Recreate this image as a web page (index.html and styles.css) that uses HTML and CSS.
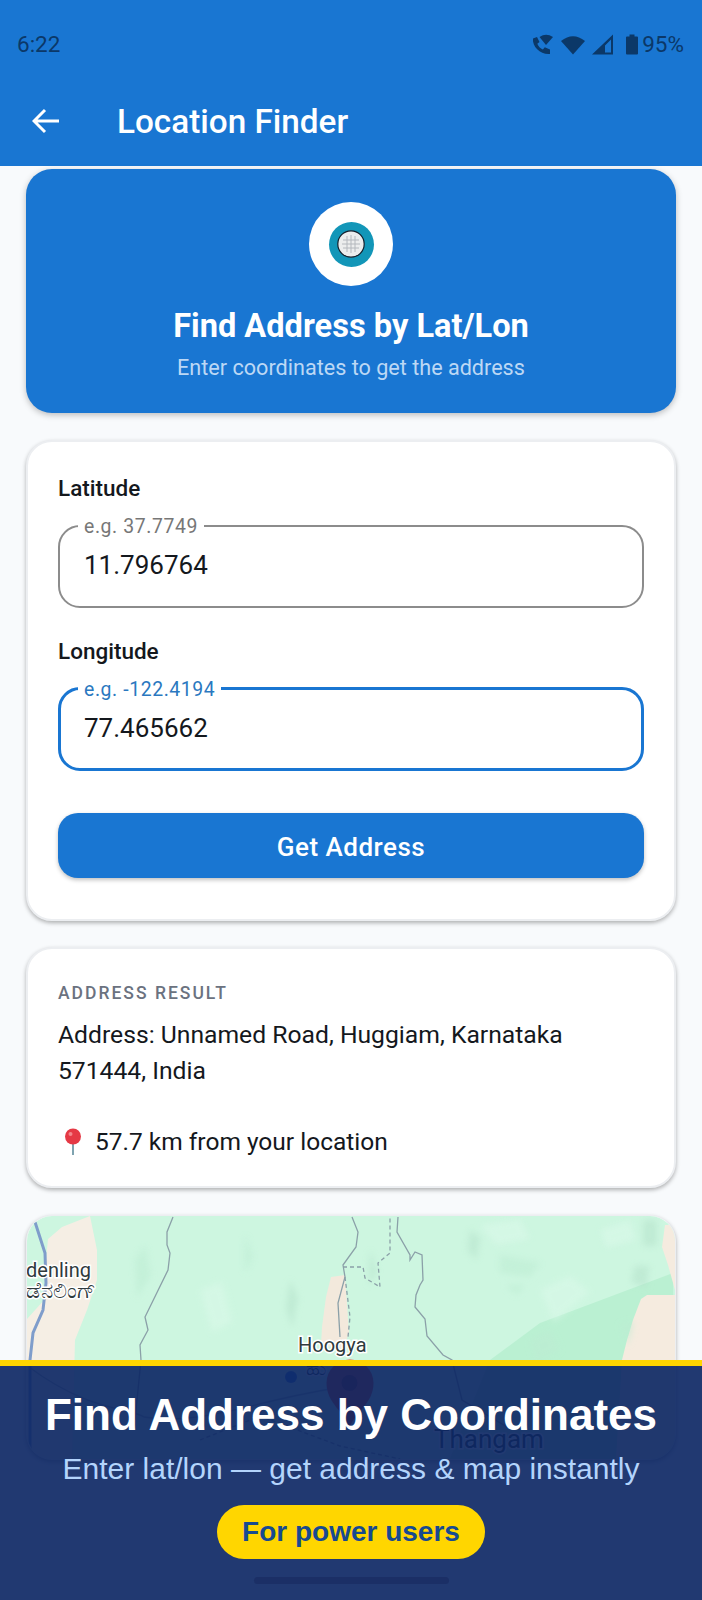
FILE: index.html
```html
<!DOCTYPE html>
<html lang="en">
<head>
  <meta charset="UTF-8">
  <title>Location Finder</title>
  <link rel="stylesheet" href="styles.css">
</head>
<body>
  <div class="phone">
    <header class="topbar">
      <div class="status">
        <span>6:22</span>
        <div class="status-right">
          <svg class="ic-call" viewBox="0 0 22 21"><path d="M1 4.500 5 3l2.500 5-2.200 1.800c1 2.600 3 4.600 5.600 5.600l1.900-2.200 5.200 2.400V20c-9 1-18-7-17-15.500z"/><path d="M7.500 3Q14 -1.500 21 3L14 11z"/></svg>
          <svg class="ic-wifi" viewBox="0 0 24 20"><path d="M0 6.500Q12 -3 24 6.500L12 20z"/></svg>
          <svg class="ic-signal" viewBox="0 0 21 20"><path d="M21 0v20H0zM19 5 13 11v7h6z" fill-rule="evenodd"/></svg>
          <svg class="ic-batt" viewBox="0 0 12 20"><path d="M3.500 0h5v2H11a1 1 0 0 1 1 1v16a1 1 0 0 1-1 1H1a1 1 0 0 1-1-1V3a1 1 0 0 1 1-1h2.500z"/></svg>
          <span>95%</span>
        </div>
      </div>
      <div class="toolbar">
        <svg class="ic-back" viewBox="0 0 28 26"><path d="M27 13H3M13 2 2 13l11 11"/></svg>
        <h1>Location Finder</h1>
      </div>
    </header>

    <main>
      <section class="hero">
        <div class="logo">
          <div class="logo-ring">
            <svg viewBox="0 0 28 28"><circle cx="14" cy="14" r="13.200" fill="#eceded" stroke="#14202c" stroke-width="1.200"/><path d="M6 10h16M5 14h18M6 18h16M10 6v16M14 5v18M18 6v16" stroke="#b4b8bd" stroke-width="1" fill="none"/></svg>
          </div>
        </div>
        <h2>Find Address by Lat/Lon</h2>
        <p>Enter coordinates to get the address</p>
      </section>

      <section class="card form-card">
        <label class="field-title" for="lat">Latitude</label>
        <div class="field">
          <span class="float-label">e.g. 37.7749</span>
          <input id="lat" value="11.796764">
        </div>
        <label class="field-title" for="lon">Longitude</label>
        <div class="field focused">
          <span class="float-label">e.g. -122.4194</span>
          <input id="lon" value="77.465662">
        </div>
        <button class="submit">Get Address</button>
      </section>

      <section class="card result-card">
        <div class="result-label">ADDRESS RESULT</div>
        <p>Address: Unnamed Road, Huggiam, Karnataka 571444, India</p>
        <p class="distance">
          <svg class="ic-pin" viewBox="0 0 20 27"><path d="M10 15v12" stroke="#7fa3b0" stroke-width="2"/><circle cx="10" cy="8.500" r="8" fill="#e53945"/><circle cx="7.500" cy="6" r="2" fill="#f4868c"/></svg>
          57.7 km from your location
        </p>
      </section>

      <section class="card map-card">
        <svg class="map" viewBox="27 1216 648 243" preserveAspectRatio="none">
          <defs>
            <filter id="soft" x="-10%" y="-10%" width="120%" height="120%"><feGaussianBlur stdDeviation="3"/></filter>
          </defs>
          <rect x="27" y="1216" width="648" height="243" fill="#cdf6e0"/>
          <path d="M90 1216l7 34v30l-10 30-12 30-3 119H27v-140l18-20v-30l3-30 14-12z" fill="#f5eee4"/>
          <path d="M322 1327l4-30 5-20 14-2 4 58-6 16-22-4z" fill="#f3e9dc"/>
          <path d="M673 1273 540 1323 490 1360 450 1459h225z" fill="#baf0d2"/>
          <path d="M675 1295h-28l-6 4-8 21-6 20-5 20-6 99h59z" fill="#f5ebdf"/>
          <path d="M665 1225l-3 22 6 18 7 25v-65z" fill="#f5ebdf"/>
          <g filter="url(#soft)" opacity=".55">
            <path d="M643 1220h14v26h-14zM635 1266h14l-2 22-16-6zM290 1280l8 18-6 30-6-20zM370 1250l7 22-8 14zM470 1230l10 8-4 22-8-10z" fill="#b5e2cb"/>
            <path d="M500 1255l40 8-10 14-30-4zM505 1285h20l-8 10zM530 1340l20-10 10 20-24 12zM620 1325l14-4-6 24zM135 1260l10-14 6 30-14 22zM245 1235l8 22-8 16z" fill="#bdecd3"/>
            <path d="M480 1225l40-6 10 20-34 6zM540 1290l30-14 20 16-36 30zM200 1290l22-8 10 40-20 10zM600 1230l30-10 6 20-30 8z" fill="#dbf9ea"/>
          </g>
          <path d="M35 1222l10 31 1 30-3 27-10 23-3 27v99" fill="none" stroke="#7f9dcb" stroke-width="3"/>
          <g fill="none" stroke="#8ba0a8" stroke-width="1.300">
            <path d="M173 1217l-6 15v13l3 8-2 17-23 47 3 13-8 15 1 15-6 60"/>
            <path d="M352 1217l6 15-2 15-13 18 2 12-7 26 2 34"/>
            <path d="M398 1217l-1 15 13 23v5l5-8 7 3 1 25-3 5-4 10-1 12 10 12 2 17 16 19 9 5 10 40 50 30"/>
            <path d="M29 1367c60 45 100 40 115 50 60 10 120-20 200-30" opacity=".7"/>
            <path d="M343 1267h20l2 11 15 9-2-24 12-10v-36" stroke-dasharray="4 3"/>
            <path d="M345 1277l5 40-2 20" stroke-dasharray="4 3"/>
            <path d="M200 1440l60-24 80 30 60 13" stroke-dasharray="4 3"/>
          </g>
          <circle cx="291" cy="1377" r="6" fill="#3f7fd6"/>
          <path d="M349.500 1428c-4-16-23-24-23-45a23.500 23.500 0 0 1 47 0c0 21-19 29-24 45z" fill="#ea4335"/>
          <circle cx="349.500" cy="1383" r="8" fill="#a1201a"/>
          <g class="map-text">
            <text x="26" y="1277">denling</text>
            <text x="96" y="1298" text-anchor="end" class="kn">ಡೆನಲಿಂಗ್</text>
            <text x="298" y="1352">Hoogya</text>
            <text x="306" y="1375">ಹು</text>
            <text x="434" y="1448" class="big">Thangam</text>
          </g>
        </svg>
      </section>
    </main>

    <aside class="banner">
      <h3>Find Address by Coordinates</h3>
      <p>Enter lat/lon — get address &amp; map instantly</p>
      <span class="pill">For power users</span>
      <div class="home-bar"></div>
    </aside>
  </div>
</body>
</html>
```

FILE: styles.css
```css
* { box-sizing: border-box; }
body {
  margin: 0;
  font-family: Roboto, sans-serif;
  background: #f8fafc;
  color: #14181d;
}
.phone {
  position: relative;
  width: 702px;
  height: 1600px;
  overflow: hidden;
}
.topbar {
  height: 166px;
  background: #1976d2;
  color: #fff;
}
.status {
  display: flex;
  justify-content: space-between;
  align-items: center;
  height: 88px;
  padding: 0 18px 0 17px;
  font-size: 22.500px;
  color: #0b3868;
}
.status-right {
  display: flex;
  align-items: center;
}
.status svg { fill: #0b3868; height: 21px; }
.ic-call { width: 22px; margin-right: 7px; }
.ic-wifi { width: 24px; margin-right: 7px; }
.ic-signal { width: 21px; margin-right: 13px; }
.ic-batt { width: 12px; margin-right: 4px; }
.toolbar {
  display: flex;
  align-items: center;
  height: 66px;
  padding: 0 0 0 32px;
}
.ic-back {
  width: 28px;
  height: 26px;
  fill: none;
  stroke: #fff;
  stroke-width: 3;
  margin-right: 57px;
}
.toolbar h1 {
  margin: 0;
  font-size: 33.300px;
  font-weight: 500;
}
main {
  padding: 3px 26px 0;
}
.hero {
  height: 244px;
  padding-top: 33px;
  background: #1976d2;
  border-radius: 26px;
  box-shadow: 0 2px 6px rgba(0,0,0,.25);
  color: #fff;
  text-align: center;
}
.logo {
  display: flex;
  justify-content: center;
  align-items: center;
  width: 84px;
  height: 84px;
  margin: 0 auto;
  border-radius: 50%;
  background: #fff;
}
.logo-ring {
  display: flex;
  justify-content: center;
  align-items: center;
  width: 45px;
  height: 45px;
  border-radius: 50%;
  background: #1296b8;
}
.logo-ring svg { width: 28px; height: 28px; }
.hero h2 {
  margin: 21px 0 0;
  font-size: 32.600px;
  line-height: 38px;
  font-weight: 700;
}
.hero p {
  margin: 11px 0 0;
  font-size: 21.600px;
  line-height: 24px;
  color: #bcd8f5;
}
.card {
  background: #fff;
  border: 2px solid #eceef1;
  border-radius: 26px;
  box-shadow: 0 2px 4px rgba(0,0,0,.3);
}
.form-card {
  height: 481px;
  margin-top: 27px;
  padding: 32px 30px 0;
}
.field-title {
  display: block;
  font-size: 22.500px;
  line-height: 28px;
  font-weight: 500;
}
.field {
  position: relative;
  height: 83px;
  margin: 23px 0 29px;
  border: 2px solid #8c8c8c;
  border-radius: 22px;
}
.field input {
  width: 100%;
  height: 100%;
  padding: 0 24px 3px;
  border: none;
  outline: none;
  background: none;
  font: 26px Roboto, sans-serif;
  color: #14181d;
}
.float-label {
  position: absolute;
  left: 18px;
  top: -11px;
  padding: 0 6px;
  background: #fff;
  font-size: 19.400px;
  line-height: 22px;
  letter-spacing: .6px;
  color: #777;
}
.field.focused {
  height: 84px;
  margin-top: 22px;
  border: 3px solid #1976d2;
}
.field.focused input { padding-left: 23px; }
.field.focused .float-label {
  left: 17px;
  color: #2a78c0;
}
.submit {
  display: block;
  width: 100%;
  height: 65px;
  margin-top: 42px;
  padding-top: 3px;
  border: none;
  border-radius: 20px;
  background: #1976d2;
  box-shadow: 0 2px 4px rgba(0,0,0,.25);
  color: #fff;
  font: 500 26px Roboto, sans-serif;
  letter-spacing: .5px;
}
.result-card {
  height: 241px;
  margin-top: 26px;
  padding: 33px 30px 0;
}
.result-label {
  font-size: 17.500px;
  line-height: 22px;
  font-weight: 500;
  letter-spacing: 2px;
  color: #6b7280;
}
.result-card p {
  margin: 13px 0 0;
  font-size: 24.700px;
  line-height: 35.500px;
}
.result-card .distance {
  display: flex;
  align-items: center;
  margin-top: 35.500px;
  font-size: 24.500px;
}
.ic-pin {
  width: 20px;
  height: 27px;
  margin: 0 12px 0 5px;
}
.map-card {
  height: 245px;
  margin-top: 27px;
  border-width: 1px;
  overflow: hidden;
}
.map {
  display: block;
  width: 100%;
  height: 100%;
}
.map-text text {
  font: 20px Roboto, sans-serif;
  fill: #2f3a3d;
  stroke: #fff;
  stroke-width: 3px;
  paint-order: stroke;
}
.map-text .kn {
  font-size: 22px;
}
.map-text .big {
  font-size: 26px;
}
.banner {
  position: absolute;
  left: 0;
  right: 0;
  bottom: 0;
  height: 240px;
  border-top: 6px solid #ffd600;
  background: rgba(11,37,99,.91);
  font-family: "Liberation Sans", sans-serif;
  text-align: center;
}
.banner h3 {
  margin: 23px 0 0;
  font-size: 44px;
  line-height: 52px;
  color: #fff;
}
.banner p {
  margin: 10px 0 0;
  font-size: 30px;
  line-height: 36px;
  color: #b3d4fc;
}
.pill {
  display: block;
  width: 268px;
  height: 54px;
  margin: 18px auto 0;
  border-radius: 27px;
  background: #ffd600;
  color: #174a90;
  font-size: 28px;
  font-weight: 700;
  line-height: 54px;
}
.home-bar {
  width: 195px;
  height: 7px;
  margin: 18px auto 0;
  border-radius: 4px;
  background: #1b2f66;
}
```
